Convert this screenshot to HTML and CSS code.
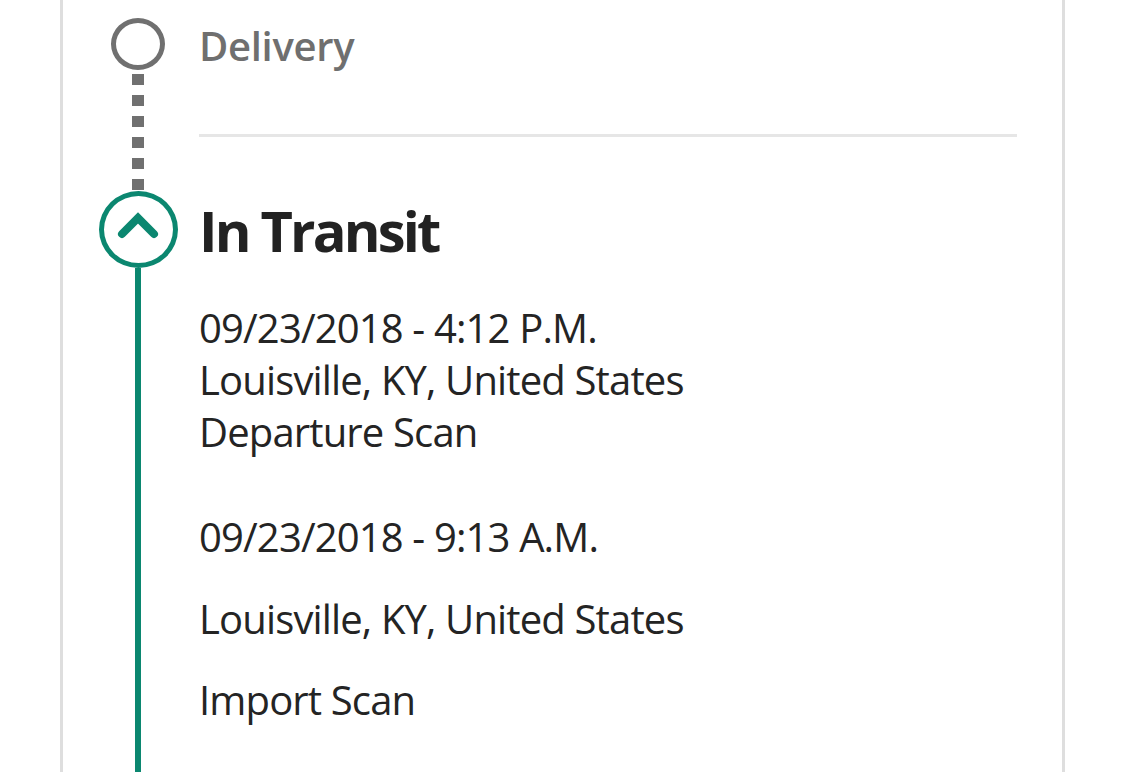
FILE: index.html
```html
<!DOCTYPE html>
<html lang="en">
<head>
<meta charset="utf-8">
<title>Tracking</title>
<link rel="stylesheet" href="styles.css">
</head>
<body>
<div class="card">
  <section class="step step-pending">
    <div class="rail">
      <span class="dot dot-pending"></span>
      <span class="line line-dashed"></span>
    </div>
    <div class="content content-pending">
      <h2 class="step-title">Delivery</h2>
      <hr class="divider">
    </div>
  </section>
  <section class="step step-current">
    <div class="rail">
      <span class="dot dot-current">
        <svg class="chevron" viewBox="0 0 42 28" width="42" height="28" aria-hidden="true">
          <polyline points="5,23 21,7 37,23" fill="none" stroke="#0b8770" stroke-width="8" stroke-linecap="round" stroke-linejoin="miter"/>
        </svg>
      </span>
      <span class="line line-solid"></span>
    </div>
    <div class="content content-current">
      <h1 class="current-title">In Transit</h1>
      <div class="event event-compact">
        <p>09/23/2018 - 4:12 P.M.<br>Louisville, KY, United States<br>Departure Scan</p>
      </div>
      <div class="event event-spaced">
        <p>09/23/2018 - 9:13 A.M.</p>
        <p>Louisville, KY, United States</p>
        <p>Import Scan</p>
      </div>
    </div>
  </section>
</div>
</body>
</html>
```

FILE: styles.css
```css
html, body {
  margin: 0;
  padding: 0;
  background: #ffffff;
}

body {
  font-family: "Open Sans", "Noto Sans", sans-serif;
  color: #242424;
  overflow: hidden;
}

.card {
  margin-left: 60px;
  width: 1005px;
  box-sizing: border-box;
  border-left: 3px solid #dedede;
  border-right: 3px solid #dedede;
  padding-right: 45px;
}

.step {
  display: grid;
  grid-template-columns: 136px 1fr;
}

.rail {
  display: flex;
  flex-direction: column;
  align-items: center;
  padding-left: 14px;
}

.dot {
  box-sizing: border-box;
  border-radius: 50%;
  flex: none;
}

.dot-pending {
  margin-top: 18px;
  width: 54px;
  height: 52px;
  border: 5px solid #707070;
}

.dot-current {
  width: 79px;
  height: 77px;
  border: 5px solid #0b8770;
  display: flex;
  align-items: center;
  justify-content: center;
}

.chevron {
  margin-bottom: 9px;
}

.line {
  flex: 1;
}

.line-dashed {
  width: 12px;
  background: repeating-linear-gradient(to bottom, #707070 0, #707070 11px, transparent 11px, transparent 21px);
  background-position: 0 4px;
}

.line-solid {
  width: 6px;
  background: #0b8770;
}

.content-pending {
  padding-top: 22px;
  padding-bottom: 54px;
}

.step-title {
  margin: 0;
  font-size: 40px;
  line-height: 48px;
  font-weight: 600;
  color: #6f6f6f;
  letter-spacing: -0.3px;
}

.divider {
  margin: 64px 0 0 0;
  border: 0;
  height: 3px;
  background: #e6e6e6;
}

.content-current {
  padding-top: 6px;
  padding-bottom: 80px;
}

.current-title {
  margin: 0;
  font-size: 56px;
  line-height: 67px;
  font-weight: 700;
  color: #222222;
  letter-spacing: -2.8px;
}

.event p {
  margin: 0;
  font-size: 40px;
  line-height: 52px;
  font-weight: 400;
  letter-spacing: -0.85px;
}

.event-compact {
  margin-top: 38px;
}

.event-spaced {
  margin-top: 53px;
}

.event-spaced p + p {
  margin-top: 29.5px;
}
```
